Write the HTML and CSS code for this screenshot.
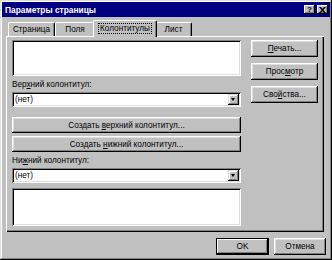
FILE: index.html
```html
<!DOCTYPE html>
<html lang="ru">
<head>
    <meta charset="UTF-8">
    <title>Параметры страницы</title>
    <link rel="stylesheet" href="styles.css">
</head>
<body>
    <div class="window">
        <div class="titlebar">
            <span class="title">Параметры страницы</span>
            <div class="title-btns">
                <span class="tbtn">?</span>
                <span class="tbtn close">
                    <svg width="7" height="6" viewBox="0 0 7 6"><path d="M0 0h2l1.5 1.7L5 0h2L4.5 3 7 6H5L3.5 4.3 2 6H0l2.5-3z" fill="#000"/></svg>
                </span>
            </div>
        </div>

        <div class="tabs">
            <div class="tab t1">Страница</div>
            <div class="tab t2">Поля</div>
            <div class="tab t3 active"><span class="focus">Колонтитулы</span></div>
            <div class="tab t4">Лист</div>
        </div>

        <div class="panel">
            <div class="left">
                <div class="field box-top"></div>
                <div class="label">Вер<u>х</u>ний колонтитул:</div>
                <div class="combo">
                    <span class="combo-text">(нет)</span>
                    <span class="arrow"></span>
                </div>
                <div class="btn wide first"><span>Создать <u>в</u>ерхний колонтитул...</span></div>
                <div class="btn wide"><span>Создать <u>н</u>ижний колонтитул...</span></div>
                <div class="label second">Ни<u>ж</u>ний колонтитул:</div>
                <div class="combo">
                    <span class="combo-text">(нет)</span>
                    <span class="arrow"></span>
                </div>
                <div class="field box-bottom"></div>
            </div>
            <div class="right">
                <div class="btn side"><span><u>П</u>ечать...</span></div>
                <div class="btn side"><span>Прос<u>м</u>отр</span></div>
                <div class="btn side"><span>Сво<u>й</u>ства...</span></div>
            </div>
        </div>

        <div class="footer">
            <div class="btn ok">OK</div>
            <div class="btn cancel">Отмена</div>
        </div>
    </div>
</body>
</html>
```

FILE: styles.css
```css
body {
    margin: 0;
    font-family: 'Liberation Sans', Arial, sans-serif;
    font-size: 8.2px;
    color: #000;
    background: #c0c0c0;
}

u {
    text-decoration: underline;
    text-underline-offset: 1px;
}

.window {
    width: 332px;
    height: 260px;
    box-sizing: border-box;
    padding: 2px;
    background: #c0c0c0;
    box-shadow: inset -1px -1px #000, inset 1px 1px #dfdfdf,
                inset -2px -2px #808080, inset 2px 2px #fff;
}

/* title bar */
.titlebar {
    height: 15px;
    background: #000080;
    display: flex;
    align-items: center;
    justify-content: space-between;
    padding: 0 2px 0 3px;
}

.title {
    color: #fff;
    font-weight: bold;
    font-size: 8.4px;
}

.title-btns {
    display: flex;
    gap: 2px;
}

.tbtn {
    width: 11px;
    height: 9px;
    box-sizing: border-box;
    background: #c0c0c0;
    box-shadow: inset -1px -1px #000, inset 1px 1px #fff, inset -2px -2px #808080;
    display: flex;
    align-items: center;
    justify-content: center;
    font-weight: bold;
    font-size: 8px;
    line-height: 1;
}

/* tabs */
.tabs {
    display: flex;
    align-items: flex-end;
    height: 16px;
    margin-top: 3px;
    padding-left: 6px;
    position: relative;
    z-index: 1;
}

.tab {
    height: 14px;
    box-sizing: border-box;
    display: flex;
    align-items: center;
    justify-content: center;
    border-top: 1px solid #fff;
    border-left: 1px solid #fff;
    border-right: 1px solid #000;
    border-top-left-radius: 2px;
    border-top-right-radius: 2px;
    box-shadow: inset -1px 0 #808080;
    background: #c0c0c0;
}

.t1 { width: 47px; }
.t2 { width: 40px; }
.t3 { width: 64px; margin: 0 -2px; }
.t4 { width: 37px; }

.tab.active {
    height: 17px;
    margin-bottom: -1px;
    padding-bottom: 2px;
    position: relative;
}

.focus {
    outline: 1px dotted #000;
    padding: 0 1px;
}

/* panel */
.panel {
    margin-left: 4px;
    width: 318px;
    height: 196px;
    box-sizing: border-box;
    padding: 4px 0 0 6px;
    display: flex;
    gap: 10px;
    box-shadow: inset 1px 1px #fff, inset -1px -1px #000, inset -2px -2px #808080;
}

.left {
    width: 229px;
    display: flex;
    flex-direction: column;
}

.right {
    width: 67px;
    display: flex;
    flex-direction: column;
    gap: 6px;
}

.field {
    background: #fff;
    box-shadow: inset 1px 1px #808080, inset -1px -1px #fff,
                inset 2px 2px #000, inset -2px -2px #dfdfdf;
}

.box-top { height: 36px; }
.box-bottom { height: 38px; margin-top: 5px; }

.label {
    margin-top: 4px;
    height: 10px;
    line-height: 10px;
}

.label.second {
    margin-top: 4px;
}

.combo {
    height: 15px;
    margin-top: 2px;
    box-sizing: border-box;
    background: #fff;
    display: flex;
    align-items: center;
    justify-content: space-between;
    padding: 2px;
    box-shadow: inset 1px 1px #808080, inset -1px -1px #fff,
                inset 2px 2px #000, inset -2px -2px #dfdfdf;
}

.combo-text {
    padding-left: 1px;
}

.arrow {
    width: 11px;
    height: 11px;
    background: #c0c0c0;
    box-shadow: inset -1px -1px #000, inset 1px 1px #dfdfdf, inset -2px -2px #808080, inset 2px 2px #fff;
    position: relative;
}

.arrow::after {
    content: '';
    position: absolute;
    left: 3px;
    top: 4px;
    border-left: 2.5px solid transparent;
    border-right: 2.5px solid transparent;
    border-top: 3px solid #000;
}

/* buttons */
.btn {
    height: 17px;
    box-sizing: border-box;
    display: flex;
    align-items: center;
    justify-content: center;
    background: #c0c0c0;
    box-shadow: inset -1px -1px #000, inset 1px 1px #fff,
                inset -2px -2px #808080, inset 2px 2px #dfdfdf;
}

.btn.wide { height: 16px; }
.btn.first { margin-top: 10px; }
.btn.wide + .btn.wide { margin-top: 3px; }

.footer {
    display: flex;
    justify-content: flex-end;
    gap: 5px;
    margin-top: 6px;
    padding-right: 4px;
}

.ok {
    width: 53px;
    box-shadow: inset 1px 1px #000, inset -1px -1px #000,
                inset -2px -2px #000, inset 2px 2px #fff,
                inset -3px -3px #808080;
}

.cancel { width: 52px; }
```
